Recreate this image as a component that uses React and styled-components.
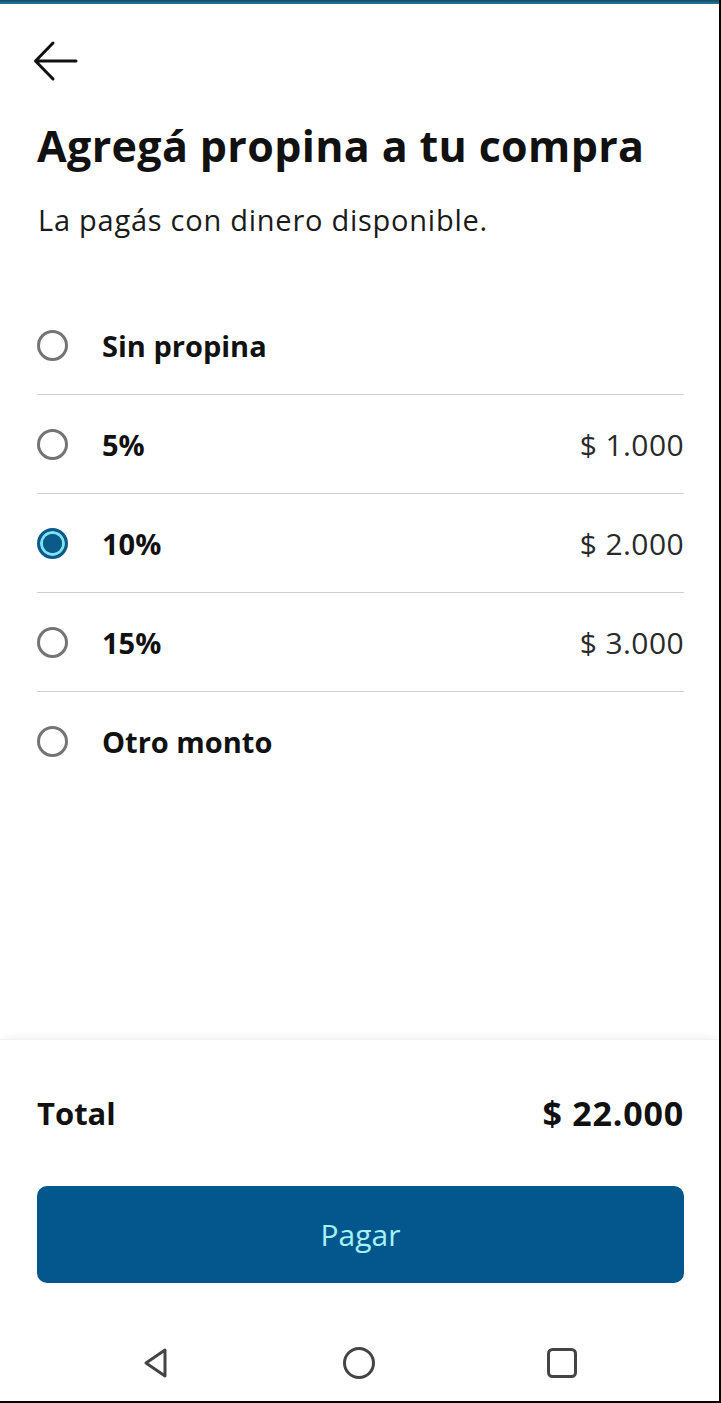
import styled, { createGlobalStyle } from "styled-components";
import { useState } from "react";

const GlobalStyle = createGlobalStyle`
  * { box-sizing: border-box; }
  body {
    margin: 0;
    background: #fff;
    font-family: "Open Sans", "Liberation Sans", sans-serif;
    color: #111;
  }
`;

const options = [
  { id: "none", label: "Sin propina", amount: null },
  { id: "5", label: "5%", amount: "$ 1.000" },
  { id: "10", label: "10%", amount: "$ 2.000" },
  { id: "15", label: "15%", amount: "$ 3.000" },
  { id: "other", label: "Otro monto", amount: null },
];

function BackArrow() {
  return (
    <svg width="46" height="46" viewBox="0 0 46 46" fill="none">
      <path
        d="M44 23H4M21 5L3.5 23L21 41"
        stroke="#111"
        strokeWidth="3"
        strokeLinecap="round"
        strokeLinejoin="round"
      />
    </svg>
  );
}

function App() {
  const [selected, setSelected] = useState("10");

  return (
    <Screen>
      <GlobalStyle />
      <StatusStrip />
      <Main>
        <BackButton aria-label="Volver">
          <BackArrow />
        </BackButton>
        <Title>Agregá propina a tu compra</Title>
        <Subtitle>La pagás con dinero disponible.</Subtitle>
        <List>
          {options.map((opt) => (
            <Row key={opt.id} onClick={() => setSelected(opt.id)}>
              <Radio $checked={selected === opt.id} />
              <Label>{opt.label}</Label>
              {opt.amount && <Amount>{opt.amount}</Amount>}
            </Row>
          ))}
        </List>
      </Main>
      <Footer>
        <TotalRow>
          <span>Total</span>
          <span>$ 22.000</span>
        </TotalRow>
        <PayButton>Pagar</PayButton>
      </Footer>
      <NavBar>
        <svg width="32" height="34" viewBox="0 0 32 34" fill="none">
          <path
            d="M25 4L6 17L25 30Z"
            stroke="#444"
            strokeWidth="3"
            strokeLinejoin="round"
          />
        </svg>
        <svg width="34" height="34" viewBox="0 0 34 34" fill="none">
          <circle cx="17" cy="17" r="14.5" stroke="#444" strokeWidth="3" />
        </svg>
        <svg width="34" height="34" viewBox="0 0 34 34" fill="none">
          <rect x="3.5" y="3.5" width="27" height="27" rx="4" stroke="#444" strokeWidth="3" />
        </svg>
      </NavBar>
    </Screen>
  );
}

const Screen = styled.div`
  width: 721px;
  height: 1403px;
  display: flex;
  flex-direction: column;
  border-right: 2px solid #000;
  border-bottom: 2px solid #000;
  background: #fff;
  overflow: hidden;
`;

const StatusStrip = styled.div`
  height: 4px;
  flex-shrink: 0;
  background: linear-gradient(#0f4a66, #2a7a98);
`;

const Main = styled.main`
  flex: 1;
  padding: 34px 35px 0 37px;
  display: flex;
  flex-direction: column;
`;

const BackButton = styled.button`
  border: none;
  background: none;
  padding: 0;
  width: 46px;
  height: 46px;
  cursor: pointer;
  margin-left: -5px;
`;

const Title = styled.h1`
  margin: 36px 0 0 0;
  font-size: 43px;
  line-height: 52px;
  font-weight: 700;
  letter-spacing: 0.35px;
  color: #111;
`;

const Subtitle = styled.p`
  margin: 30px 0 0 1px;
  font-size: 29px;
  line-height: 36px;
  font-weight: 400;
  letter-spacing: 0.75px;
  color: #1a1a1a;
`;

const List = styled.ul`
  list-style: none;
  margin: 58px 0 0 0;
  padding: 0;
`;

const Row = styled.li`
  display: flex;
  align-items: center;
  height: 99px;
  border-bottom: 1.5px solid #cfcfcf;
  cursor: pointer;
  &:last-child {
    border-bottom: none;
  }
`;

const Radio = styled.span`
  width: 31px;
  height: 31px;
  border-radius: 50%;
  flex-shrink: 0;
  border: 3px solid ${(p) => (p.$checked ? "#0b5a8a" : "#747474")};
  background: ${(p) => (p.$checked ? "#0b5a8a" : "#fff")};
  box-shadow: ${(p) => (p.$checked ? "inset 0 0 0 3px #7fe3f0" : "none")};
  position: relative;
  &::after {
    content: "";
    display: ${(p) => (p.$checked ? "block" : "none")};
    position: absolute;
    inset: 3px;
    border-radius: 50%;
    background: #0b5a8a;
  }
`;

const Label = styled.span`
  margin-left: 34px;
  font-size: 29px;
  font-weight: 700;
  color: #111;
  flex: 1;
`;

const Amount = styled.span`
  font-size: 30px;
  font-weight: 400;
  letter-spacing: 0.4px;
  color: #2a2a2a;
`;

const Footer = styled.footer`
  padding: 41px 35px 42px 37px;
  box-shadow: 0 -6px 8px -4px rgba(0, 0, 0, 0.06);
  border-top: 1px solid #f2f2f2;
`;

const TotalRow = styled.div`
  display: flex;
  justify-content: space-between;
  align-items: center;
  font-size: 31px;
  font-weight: 700;
  color: #111;
  height: 64px;
  span:last-child {
    font-size: 34px;
    letter-spacing: 0.8px;
  }
`;

const PayButton = styled.button`
  width: 100%;
  height: 97px;
  margin-top: 41px;
  border: none;
  border-radius: 10px;
  background: #03578c;
  color: #a6f2f7;
  font-family: "Open Sans", "Liberation Sans", sans-serif;
  font-size: 30px;
  font-weight: 400;
  cursor: pointer;
`;

const NavBar = styled.nav`
  height: 76px;
  flex-shrink: 0;
  display: flex;
  align-items: center;
  justify-content: space-between;
  padding: 0 140px 0 140px;
`;

export default App;
